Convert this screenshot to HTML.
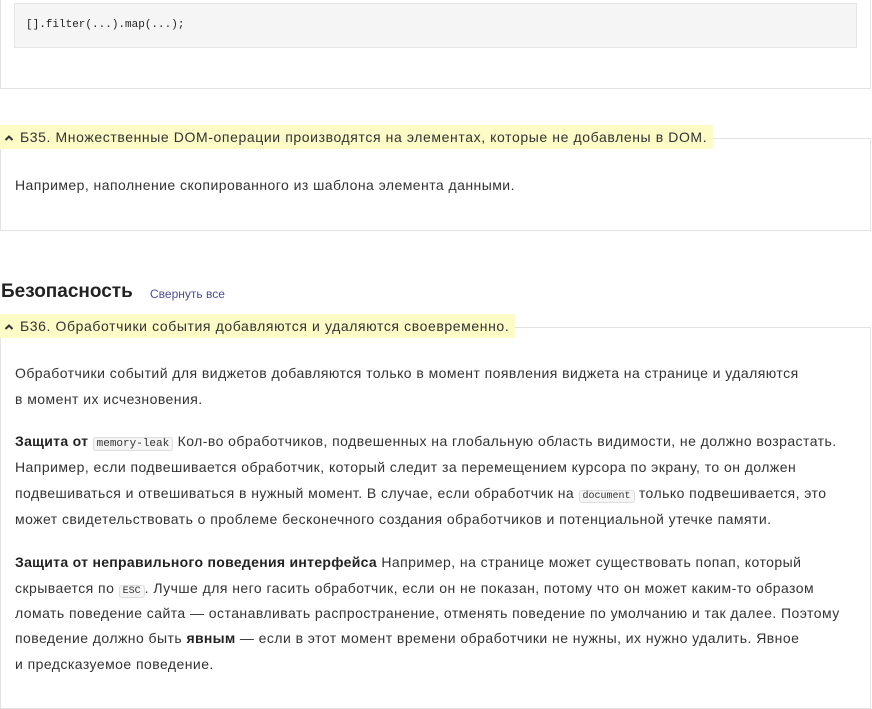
<!DOCTYPE html>
<html><head><meta charset="utf-8"><style>
body{margin:0;width:872px;height:709px;background:#fff;font-family:"Liberation Sans",sans-serif;color:#333;position:relative;overflow:hidden}
.box{position:absolute;border:1px solid #e3e3e3;background:#fff}
.l{position:absolute;left:15px;white-space:nowrap;font-size:14px;line-height:18px;letter-spacing:0.45px}
.hdr{position:absolute;left:0;background:#fdfbc6;font-size:14px;line-height:24px;height:24px;white-space:nowrap;padding:0 6px 0 4px;color:#333;letter-spacing:0.6px}
.hdr svg{vertical-align:middle;margin-right:6px}
code{font-family:"Liberation Mono",monospace;font-size:11px;background:#f5f5f5;border:1px solid #ddd;border-radius:3px;padding:0 3px;letter-spacing:0}
b{color:#222;letter-spacing:0.3px}
</style></head><body>
<div class="box" style="left:0;top:-2px;width:869px;height:89px"></div>
<div style="position:absolute;left:14px;top:3px;width:843px;height:45px;background:#f5f5f5;border:1px solid #e6e6e6;box-sizing:border-box"></div>
<div style="position:absolute;left:26px;top:19px;font-family:'Liberation Mono',monospace;font-size:11px;color:#222">[].filter(...).map(...);</div>

<div class="box" style="left:0;top:138px;width:869px;height:91px"></div>
<div class="hdr" style="top:125px"><svg width="10" height="8" viewBox="0 0 10 8"><path d="M1.5 6L5 2.5 8.5 6" stroke="#333" stroke-width="2" fill="none"/></svg>Б35. Множественные DOM-операции производятся на элементах, которые не добавлены в DOM.</div>
<div class="l" style="top:176px">Например, наполнение скопированного из шаблона элемента данными.</div>

<div style="position:absolute;left:1px;top:281px;font-size:19px;font-weight:bold;color:#222">Безопасность</div>
<div style="position:absolute;left:150px;top:287px;font-size:12px;color:#4b4b9b">Свернуть все</div>

<div class="box" style="left:0;top:327px;width:869px;height:380px"></div>
<div class="hdr" style="top:314px"><svg width="10" height="8" viewBox="0 0 10 8"><path d="M1.5 6L5 2.5 8.5 6" stroke="#333" stroke-width="2" fill="none"/></svg>Б36. Обработчики события добавляются и удаляются своевременно.</div>

<div class="l" style="top:364px">Обработчики событий для виджетов добавляются только в момент появления виджета на странице и удаляются</div>
<div class="l" style="top:390px">в момент их исчезновения.</div>
<div class="l" style="top:432px"><b>Защита от</b> <code>memory-leak</code> Кол-во обработчиков, подвешенных на глобальную область видимости, не должно возрастать.</div>
<div class="l" style="top:458px">Например, если подвешивается обработчик, который следит за перемещением курсора по экрану, то он должен</div>
<div class="l" style="top:484px">подвешиваться и отвешиваться в нужный момент. В случае, если обработчик на <code style="font-size:10px">document</code> только подвешивается, это</div>
<div class="l" style="top:510px">может свидетельствовать о проблеме бесконечного создания обработчиков и потенциальной утечке памяти.</div>
<div class="l" style="top:553px"><b>Защита от неправильного поведения интерфейса</b> Например, на странице может существовать попап, который</div>
<div class="l" style="top:579px">скрывается по <code style="font-size:10px">ESC</code>. Лучше для него гасить обработчик, если он не показан, потому что он может каким-то образом</div>
<div class="l" style="top:604px">ломать поведение сайта — останавливать распространение, отменять поведение по умолчанию и так далее. Поэтому</div>
<div class="l" style="top:629px">поведение должно быть <b>явным</b> — если в этот момент времени обработчики не нужны, их нужно удалить. Явное</div>
<div class="l" style="top:655px">и предсказуемое поведение.</div>
</body></html>
